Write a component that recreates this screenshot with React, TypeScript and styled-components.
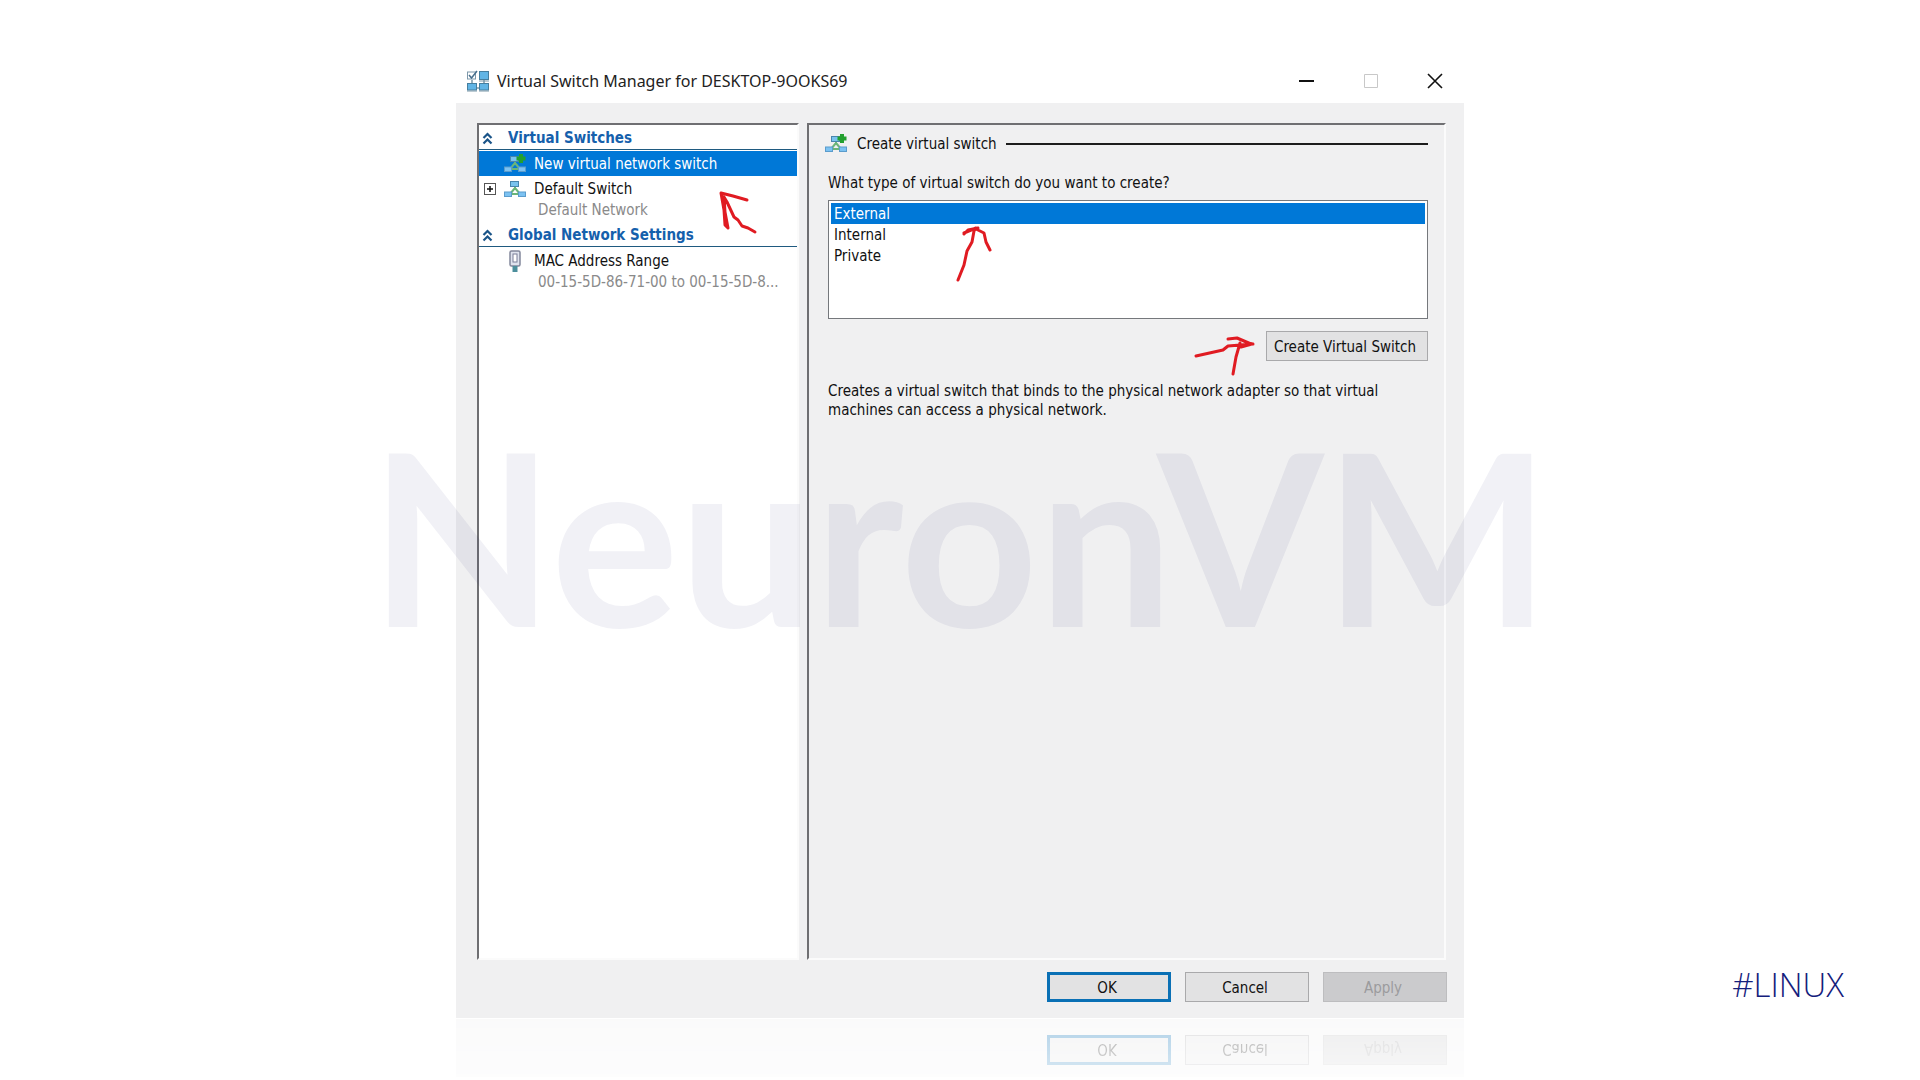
import React, { useState } from 'react';
import styled, { createGlobalStyle, css } from 'styled-components';

const uiFont = '"DejaVu Sans Condensed", "DejaVu Sans", Tahoma, sans-serif';

const GlobalStyle = createGlobalStyle`
  *, *::before, *::after { box-sizing: border-box; }
  body { margin: 0; background: #fff; overflow: hidden; }
`;

const Page = styled.div`
  position: relative;
  display: grid;
  grid-template-columns: 1fr minmax(0, 1008px) 1fr;
  grid-template-rows: minmax(0, 1fr) 62px;
  height: 100vh;
  padding-top: 60px;
  overflow: hidden;
  background: #fff;
  color: #111;
  font-family: ${uiFont};
  font-size: 15px;
`;

const Dialog = styled.main`
  grid-column: 2;
  position: relative;
  display: flex;
  flex-direction: column;
  background: #f0f0f1;
`;

const TitleBar = styled.header`
  display: flex;
  align-items: center;
  gap: 7px;
  height: 43px;
  padding: 0 14px 2px 10px;
  background: #fff;
`;

const Title = styled.h1`
  flex: 1;
  margin: 0;
  font: 400 16px/24px "Noto Sans", "Open Sans", sans-serif;
  color: #222;
`;

const WindowControls = styled.div`
  display: flex;
  gap: 34px;
`;

const WindowButton = styled.button<{ $muted?: boolean }>`
  display: grid;
  place-items: center;
  width: 30px;
  height: 30px;
  padding: 0;
  border: 0;
  background: none;
  color: ${p => (p.$muted ? '#c8c8c8' : '#111')};
`;

const Body = styled.div`
  flex: 1;
  display: grid;
  grid-template-columns: 322px minmax(0, 1fr);
  gap: 8px;
  min-height: 0;
  padding: 20px 18px 0 21px;
`;

const sunken = css`
  border: 2px solid #6f6f72;
  border-right-color: #fbfbfb;
  border-bottom-color: #fbfbfb;
`;

const Sidebar = styled.nav`
  ${sunken}
  background: #fff;
`;

const GroupHeader = styled.h2`
  display: flex;
  align-items: center;
  gap: 15px;
  height: 25px;
  margin: 0 0 1px;
  padding: 2px 0 0 3px;
  border-bottom: 1px solid #1f5a80;
  font-size: 15px;
  font-weight: 700;
  color: #1560ac;
`;

const Row = styled.a<{ $selected?: boolean }>`
  display: grid;
  grid-template-columns: 12px 24px 1fr;
  column-gap: 7px;
  align-items: center;
  height: 25px;
  padding-left: 5px;
  text-decoration: none;
  color: ${p => (p.$selected ? '#fff' : '#111')};
  background: ${p => (p.$selected ? '#0078d7' : 'transparent')};
`;

const RowNote = styled.div`
  height: 21px;
  padding-left: 59px;
  line-height: 19px;
  white-space: nowrap;
  color: #8a8a8a;
`;

const Details = styled.section`
  ${sunken}
  display: flex;
  flex-direction: column;
  padding: 7px 16px 0 19px;
`;

const SectionTitle = styled.h2`
  display: flex;
  align-items: center;
  gap: 9px;
  height: 24px;
  margin: 0 0 17px -4px;
  font-size: 15px;
  font-weight: 400;

  &::after {
    content: '';
    flex: 1;
    height: 2px;
    background: #1c1c1c;
  }
`;

const Question = styled.label`
  height: 27px;
  line-height: 20px;
`;

const ListBox = styled.select`
  width: 100%;
  height: 119px;
  padding: 2px;
  border: 1px solid #75787c;
  border-radius: 0;
  outline: 0;
  overflow: hidden;
  background: #fff;
  color: #111;
  font: inherit;

  option {
    height: 21px;
    min-height: 21px;
    padding: 2px 3px 0;
    line-height: 19px;
  }
  option:checked {
    background: #0078d7 linear-gradient(#0078d7, #0078d7);
    color: #fff;
    -webkit-text-fill-color: #fff;
  }
`;

const Button = styled.button<{ $primary?: boolean }>`
  height: 30px;
  min-width: 124px;
  padding: 2px 10px 0 6px;
  border: ${p => (p.$primary ? '3px solid #0a70b5' : '1px solid #a9a9ab')};
  background: #e2e2e3;
  color: #111;
  font: inherit;
  white-space: nowrap;

  &:disabled {
    background: #cbcbcd;
    border-color: #bdbdbf;
    color: #9b9b9d;
  }
`;

const CreateButton = styled(Button)`
  align-self: flex-end;
  width: 162px;
  margin: 12px 0 21px;
`;

const Description = styled.p`
  margin: 0;
  max-width: 570px;
  line-height: 19px;
`;

const Footer = styled.footer`
  display: flex;
  justify-content: flex-end;
  gap: 14px;
  padding: 12px 17px 16px 0;
  background: #f0f0f1;
`;

const Reflection = styled.div`
  grid-column: 2;
  padding-top: 1px;
  mask-image: linear-gradient(rgba(0, 0, 0, 0.33), rgba(0, 0, 0, 0.15));

  & > ${Footer} { transform: scaleY(-1); }
`;

const Annotations = styled.svg`
  position: absolute;
  top: 0;
  left: 0;
  pointer-events: none;
`;

const Watermark = styled.div`
  position: absolute;
  inset: 0;
  display: grid;
  place-items: center;
  padding-bottom: 12px;
  font: 700 240px/1 Lato, sans-serif;
  color: rgba(20, 15, 100, 0.06);
  pointer-events: none;
`;

const Tag = styled.a`
  grid-column: 3;
  grid-row: 1;
  align-self: end;
  justify-self: end;
  margin: 0 76px 13px 0;
  font: 300 33px/40px "Open Sans", sans-serif;
  color: #14207c;
  text-decoration: none;
`;

const ManagerIcon = () => (
  <svg width="24" height="22" viewBox="0 0 24 22" aria-hidden="true">
    <path d="M6 10v8h12V8" fill="none" stroke="#7b98a8" strokeWidth="1.5" />
    <rect x="1.5" y="2" width="8" height="7" fill="#fff" stroke="#7d98aa" />
    <path d="M3 5l2.500 3L11 1" fill="none" stroke="#476e8c" strokeWidth="1.500" />
    <rect x="13.500" y="1.500" width="9" height="8" fill="#62b5e5" stroke="#467f9f" />
    <rect x="1.500" y="13.500" width="9" height="6.500" fill="#62b5e5" stroke="#467f9f" />
    <rect x="13.500" y="13.500" width="9" height="6.500" fill="#62b5e5" stroke="#467f9f" />
    <path d="M1 21h10M13 21h10M13 11h10" stroke="#7b98a8" />
  </svg>
);

const SwitchIcon = ({ added = false }: { added?: boolean }) => (
  <svg width="24" height="20" viewBox="0 0 24 20" aria-hidden="true">
    <path d="M12 7v4M12 9l-5 6M12 9l5 6M7 15h10" fill="none" stroke="#6bb579" strokeWidth="2" />
    <rect x="7.500" y="2.500" width="8" height="5" fill="#79c3ee" stroke="#4a86ad" />
    <rect x="1.500" y="13" width="7" height="4.500" fill="#7cc2f2" stroke="#5b9ccc" />
    <rect x="15.500" y="13" width="7" height="4.500" fill="#7cc2f2" stroke="#5b9ccc" />
    {added && <path d="M18 0v9M13.500 4.500h9" stroke="#23a02f" strokeWidth="4" />}
  </svg>
);

const AdapterIcon = () => (
  <svg width="24" height="24" viewBox="0 0 24 24" aria-hidden="true">
    <rect x="7" y="2" width="10" height="15" rx="1.500" fill="#dfe3ee" stroke="#83889c" strokeWidth="1.500" />
    <rect x="10" y="5" width="4" height="8" fill="#fff" stroke="#7a7f98" />
    <path d="M12 17v6" stroke="#4c8f9c" strokeWidth="5" />
  </svg>
);

const Chevrons = () => (
  <svg width="11" height="13" viewBox="0 0 11 13" aria-hidden="true">
    <path d="M1.500 6l4-4 4 4M1.500 11.500l4-4 4 4" fill="none" stroke="#1a5488" strokeWidth="2.200" />
  </svg>
);

const Expander = () => (
  <svg width="12" height="12" viewBox="0 0 12 12" aria-hidden="true">
    <rect x=".5" y=".5" width="11" height="11" fill="#fff" stroke="#555" />
    <path d="M3 6h6M6 3v6" stroke="#111" strokeWidth="1.500" />
  </svg>
);

const FooterButtons = () => (
  <Footer>
    <Button $primary>OK</Button>
    <Button>Cancel</Button>
    <Button disabled>Apply</Button>
  </Footer>
);

export default function App() {
  const [kind, setKind] = useState('External');

  return (
    <Page>
      <GlobalStyle />
      <Dialog>
        <TitleBar>
          <ManagerIcon />
          <Title>Virtual Switch Manager for DESKTOP-9OOKS69</Title>
          <WindowControls>
            <WindowButton aria-label="Minimize">
              <svg width="16" height="16"><path d="M0 8h15" stroke="currentColor" strokeWidth="2" /></svg>
            </WindowButton>
            <WindowButton aria-label="Maximize" $muted disabled>
              <svg width="16" height="16"><path d="M1.500 1.500h13v13h-13z" fill="none" stroke="currentColor" /></svg>
            </WindowButton>
            <WindowButton aria-label="Close">
              <svg width="16" height="16"><path d="M1 1l14 14M15 1L1 15" stroke="currentColor" strokeWidth="1.600" /></svg>
            </WindowButton>
          </WindowControls>
        </TitleBar>

        <Body>
          <Sidebar>
            <GroupHeader><Chevrons />Virtual Switches</GroupHeader>
            <Row href="#new" $selected>
              <span />
              <SwitchIcon added />
              New virtual network switch
            </Row>
            <Row href="#default">
              <Expander />
              <SwitchIcon />
              Default Switch
            </Row>
            <RowNote>Default Network</RowNote>
            <GroupHeader><Chevrons />Global Network Settings</GroupHeader>
            <Row href="#mac">
              <span />
              <AdapterIcon />
              MAC Address Range
            </Row>
            <RowNote>00-15-5D-86-71-00 to 00-15-5D-8...</RowNote>
          </Sidebar>

          <Details>
            <SectionTitle><SwitchIcon added />Create virtual switch</SectionTitle>
            <Question htmlFor="kind">What type of virtual switch do you want to create?</Question>
            <ListBox id="kind" size={5} value={kind} onChange={e => setKind(e.target.value)}>
              <option>External</option>
              <option>Internal</option>
              <option>Private</option>
            </ListBox>
            <CreateButton>Create Virtual Switch</CreateButton>
            <Description>
              Creates a virtual switch that binds to the physical network adapter so that virtual
              machines can access a physical network.
            </Description>
          </Details>
        </Body>

        <FooterButtons />

        <Annotations width="1008" height="400" viewBox="0 0 1008 400" aria-hidden="true">
          <g fill="none" stroke="#e01b22" strokeWidth="3" strokeLinecap="round" strokeLinejoin="round">
            <path d="M291 140l-14 -4l-12 -3l3 17l1 15l3 3l-3 -16l-1 -15l3 5l7 15l4 3l4 6l6 2l7 4" />
            <path d="M502 220l6 -15l3 -14l5 -9l2 -11l2 -3M508 174l4 -4l10 -2M508 173l12 -5M520 169l8 4l2 9l4 8" />
            <path d="M740 296l27 -6l5 -4l25 -2M772 279l9 -1l14 6M784 283l-4 14l-3 17M796 284l-11 3" />
          </g>
        </Annotations>
      </Dialog>

      <Tag href="#linux">#LINUX</Tag>

      <Reflection aria-hidden="true" inert>
        <FooterButtons />
      </Reflection>

      <Watermark>NeuronVM</Watermark>
    </Page>
  );
}
